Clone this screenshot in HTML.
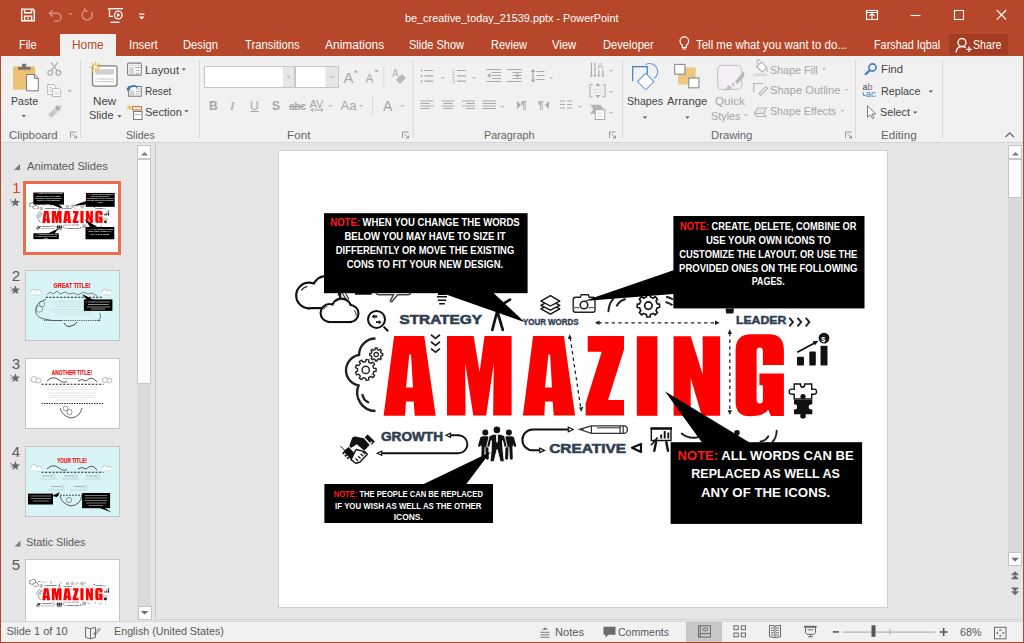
<!DOCTYPE html>
<html><head><meta charset="utf-8"><title>PowerPoint</title>
<style>
*{margin:0;padding:0;box-sizing:border-box}
html,body{width:1024px;height:643px;overflow:hidden;background:#e6e6e6;font-family:"Liberation Sans",sans-serif}
.a{position:absolute}
.t{position:absolute;white-space:pre;font-family:"Liberation Sans",sans-serif}
</style></head><body>
<!-- title + tabs -->
<div class="a" style="left:0;top:0;width:1024px;height:56px;background:#b7472a"></div>
<div class="a" style="left:60px;top:34px;width:56px;height:22px;background:#f1f1f1"></div>
<div class="a" style="left:949px;top:34px;width:59px;height:21px;background:#a33c22"></div>
<!-- ribbon -->
<div class="a" style="left:0;top:56px;width:1024px;height:87px;background:#f1f1f1;border-bottom:1px solid #d5d5d5"></div>
<!-- main area -->
<div class="a" style="left:0;top:143px;width:1024px;height:478px;background:#e6e6e6"></div>
<div class="a" style="left:157px;top:619px;width:866px;height:1px;background:#d4d4d4"></div>
<!-- status bar -->
<div class="a" style="left:0;top:621px;width:1024px;height:22px;background:#f1f1f1;border-top:1px solid #d6d6d6"></div>
<div class="a" style="left:686px;top:622px;width:36px;height:20px;background:#c8c8c8"></div>
<!-- window borders -->
<div class="a" style="left:0;top:56px;width:1px;height:587px;background:#b7472a"></div>
<div class="a" style="left:1023px;top:56px;width:1px;height:587px;background:#b7472a"></div>
<div class="a" style="left:0;top:642px;width:1024px;height:1px;background:#b7472a"></div>
<!-- left panel scrollbar -->
<div class="a" style="left:137px;top:145px;width:14px;height:475px;background:#dadada"></div>
<div class="a" style="left:137px;top:145px;width:14px;height:14px;background:#fff;border:1px solid #c6c6c6"></div>
<div class="a" style="left:137px;top:159px;width:14px;height:225px;background:#fff;border:1px solid #c6c6c6"></div>
<div class="a" style="left:137.5px;top:606px;width:14px;height:14px;background:#fff;border:1px solid #c6c6c6"></div>
<div class="a" style="left:155px;top:143px;width:1px;height:477px;background:#c8c8c8"></div>
<!-- right scrollbar -->
<div class="a" style="left:1008px;top:145px;width:14px;height:419px;background:#dadada"></div>
<div class="a" style="left:1008px;top:145px;width:14px;height:14px;background:#fff;border:1px solid #c6c6c6"></div>
<div class="a" style="left:1008px;top:159px;width:14px;height:39px;background:#fff;border:1px solid #c6c6c6"></div>
<div class="a" style="left:1008px;top:552px;width:14px;height:14px;background:#fff;border:1px solid #c6c6c6"></div>
<!-- slide -->
<div class="a" style="left:278px;top:150px;width:610px;height:458px;background:#fff;border:1px solid #cfcfcf"></div>
<!-- thumbnails -->
<div class="a" style="left:23.3px;top:180.5px;width:97.5px;height:74px;background:#fff;border:3px solid #ea6e4b"></div>
<div class="a" style="left:25px;top:270px;width:95px;height:71px;background:#d8f4f6;border:1px solid #c6c6c6"></div>
<div class="a" style="left:25px;top:358px;width:95px;height:71px;background:#fff;border:1px solid #c6c6c6"></div>
<div class="a" style="left:25px;top:446px;width:95px;height:71px;background:#d8f4f6;border:1px solid #c6c6c6"></div>
<div class="a" style="left:25px;top:559px;width:95px;height:62px;background:#fff;border:1px solid #c6c6c6;border-bottom:none"></div>
<svg class="a" style="left:0;top:0" width="1024" height="643" viewBox="0 0 1024 643">
<!-- ===== title bar icons ===== -->
<g fill="none" stroke="#fff" stroke-width="1.4">
  <!-- save -->
  <path d="M21.7 9.1h11.3l1.3 1.3v10.3h-12.6z"/>
  <path d="M24.6 9.1v3.6h7v-3.6"/>
  <path d="M24.6 20.7v-4.6h7v4.6"/>
</g>
<rect x="27.5" y="17.6" width="1.5" height="1.8" fill="#fff"/>
<g fill="none" stroke="#d98f7b" stroke-width="1.5">
  <!-- undo -->
  <path d="M49.5 13.2h7.5a4 4 0 0 1 0 8h-2.5"/>
  <path d="M52.7 10l-3.2 3.2 3.2 3.2"/>
  <!-- redo circle -->
  <path d="M84.8 10.6a5 5 0 1 0 6.6 1.6"/>
  <path d="M85 7.6l-.2 3.1 3 .6"/>
</g>
<path d="M68.5 13.3h4l-2 2.3z" fill="#d98f7b"/>
<g fill="none" stroke="#fff" stroke-width="1.3">
  <path d="M107.8 8.7h15.2"/>
  <path d="M109.5 9.3v7.1h3.5"/>
  <circle cx="118.3" cy="15" r="3.8"/>
  <path d="M110.5 22.3h9"/>
</g>
<path d="M117 13v4.2l3.3-2.1z" fill="#fff"/>
<rect x="139" y="13.5" width="5.5" height="1.2" fill="#fff"/>
<path d="M139 16.5h5.5l-2.75 3z" fill="#fff"/>
<!-- window controls -->
<g fill="none" stroke="#fff" stroke-width="1.1">
  <rect x="866.5" y="10.5" width="11" height="9"/>
  <path d="M866.5 12.5h11"/>
  <path d="M869.5 16l2.5-2.5 2.5 2.5M872 13.7v5.8"/>
  <path d="M910.5 15.5h10"/>
  <rect x="954.5" y="10.5" width="9" height="9"/>
  <path d="M996.8 10l9.4 9.6M1006.2 10l-9.4 9.6"/>
</g>
<!-- tell me bulb -->
<g fill="none" stroke="#fff" stroke-width="1.1">
  <path d="M682.3 45.5c-1.8-1.4-2.3-3-2.3-4.3a4.3 4.3 0 0 1 8.6 0c0 1.3-.5 2.9-2.3 4.3v2h-4z"/>
  <path d="M682.5 49h3.6"/>
</g>
<!-- share person -->
<g fill="none" stroke="#fff" stroke-width="1.3">
  <circle cx="962" cy="42.5" r="4"/>
  <path d="M956 52.5c.5-4 3-6 6-6 1.5 0 2.7.4 3.7 1.2"/>
  <path d="M966.3 49.3h5.5M969 46.5v5.6"/>
</g>
<!-- ===== ribbon ===== -->
<!-- separators -->
<g fill="#d9d9d9">
  <rect x="80" y="60" width="1" height="78"/>
  <rect x="199" y="60" width="1" height="78"/>
  <rect x="412.5" y="60" width="1" height="78"/>
  <rect x="622" y="60" width="1" height="78"/>
  <rect x="855" y="60" width="1" height="78"/>
  <rect x="942" y="60" width="1" height="78"/>
</g>
<!-- paste -->
<rect x="13" y="66.3" width="22.2" height="23.4" rx="1.5" fill="#ebc174"/>
<rect x="18" y="67" width="12.7" height="2.8" fill="#767676"/>
<rect x="22" y="63.7" width="4.3" height="3.5" rx="1" fill="#767676"/>
<path d="M26.6 74.5h7.8l3.9 3.9v12.4h-11.7z" fill="#fff" stroke="#7a7a7a" stroke-width="1"/>
<path d="M34.4 74.5v3.9h3.9" fill="none" stroke="#7a7a7a" stroke-width="1"/>
<path d="M21.7 115h4.3l-2.15 2.2z" fill="#555"/>
<!-- scissors -->
<g fill="none" stroke="#adadad" stroke-width="1.2">
  <circle cx="50.3" cy="72.8" r="2.4"/>
  <circle cx="58.4" cy="72.8" r="2.4"/>
  <path d="M51.5 70.7l6.2-8.3M57.2 70.7l-6.2-8.3"/>
</g>
<!-- copy -->
<g fill="#fff" stroke="#b5b5b5" stroke-width="1">
  <path d="M47.7 84.5h6l2 2v8h-8z"/>
  <path d="M52.7 88.5h6l2 2v6h-8z"/>
</g>
<g stroke="#c3c3c3" stroke-width=".8"><path d="M49 87.5h3M49 89.5h3M49 91.5h3M54.5 92h4.5M54.5 94h4.5"/></g>
<path d="M67.5 90h4.3l-2.15 2.2z" fill="#b0b0b0"/>
<!-- format painter -->
<path d="M48 114.5l6-6 3.5 3.5-6 6z" fill="#c8c8c8"/>
<path d="M54.5 108l3-3 3.5 3.5-3 3z" fill="#b0b0b0"/>
<path d="M57.8 107.3l2.6-2.4 1.3 1.3-2.4 2.6z" fill="#c0c0c0"/>
<!-- clipboard launcher -->
<g fill="none" stroke="#8a8a8a" stroke-width=".9">
  <path d="M70.5 138v-6h6"/>
  <path d="M72.5 134l4 4M74 138h2.5v-2.5"/>
</g>
<!-- new slide -->
<rect x="92.5" y="65.8" width="24.5" height="20.3" rx="2" fill="#fff" stroke="#7d7d7d" stroke-width="1.3"/>
<rect x="95.4" y="69.1" width="18.6" height="5.5" fill="#d0d0d0"/>
<path d="M98 79h16M98 81.6h16" stroke="#c4c4c4" stroke-width="1"/>
<path d="M95.4 79h1.6M95.4 81.6h1.6" stroke="#c4c4c4" stroke-width="1"/>
<g stroke="#efc060" stroke-width="1.3"><path d="M95.4 61.6v11M89.9 67.1h11M91.5 63.2l7.8 7.8M99.3 63.2l-7.8 7.8"/></g>
<circle cx="95.4" cy="67.1" r="1.6" fill="#fff"/>
<path d="M117.3 115.3h4.3l-2.15 2.2z" fill="#555"/>
<!-- layout / reset / section -->
<rect x="127.6" y="63.1" width="13.7" height="12" rx="1" fill="#fff" stroke="#7d7d7d" stroke-width="1.1"/>
<path d="M128.5 65.3h12" stroke="#bdbdbd" stroke-width=".8"/>
<rect x="129.3" y="67" width="4.4" height="7" fill="#d0d0d0"/>
<path d="M135 67.5h5M135.5 70.4h3.5M135.5 73.3h3.5" stroke="#9a9a9a" stroke-width=".9"/>
<path d="M181.6 68.4h4.3l-2.15 2.2z" fill="#555"/>
<rect x="128.6" y="86.5" width="12.7" height="9.7" fill="#fff" stroke="#7d7d7d" stroke-width="1.1"/>
<rect x="130" y="90.5" width="4.5" height="4.5" fill="#d0d0d0"/>
<path d="M136 89h4M136 91.5h4M136 94h3" stroke="#9a9a9a" stroke-width=".8"/>
<path d="M128.8 89.5a5 4.6 0 0 1 8.6 -2" fill="none" stroke="#3f7fc1" stroke-width="1.8"/>
<path d="M126.2 87.3l1.3 4.3 3.3-2.6z" fill="#3f7fc1"/>
<g stroke="#efc060" stroke-width=".9"><path d="M129.5 104.5v6M126.5 107.5h6M127.3 105.3l4.4 4.4M131.7 105.3l-4.4 4.4"/></g>
<rect x="132.5" y="106.5" width="9" height="3.5" fill="none" stroke="#e8733e" stroke-width="1.1"/>
<rect x="133.5" y="111.5" width="8.5" height="8" fill="#fff" stroke="#7d7d7d" stroke-width="1"/>
<path d="M135 114.5h5.5" stroke="#b0b0b0" stroke-width="1"/>
<path d="M184.3 110.3h4.3l-2.15 2.2z" fill="#555"/>
<!-- font boxes -->
<rect x="204.5" y="66.5" width="90" height="21" fill="#fff" stroke="#c6c6c6"/>
<rect x="283" y="67" width="11" height="20" fill="#e6e6e6"/>
<rect x="295.5" y="66.5" width="43" height="21" fill="#fff" stroke="#c6c6c6"/>
<rect x="325.5" y="67" width="12.5" height="20" fill="#e6e6e6"/>
<path d="M286.5 76.3h4l-2 2z M329.8 76.3h4l-2 2z" fill="#b9b9b9"/>
<!-- grow/shrink font -->
<g fill="#a9a9a9" font-family="Liberation Sans" font-size="15">
  <text x="343.5" y="83">A</text>
  <text x="365.5" y="83" font-size="12">A</text>
</g>
<path d="M353.5 72.5l2.2-2.5 2.2 2.5z M374.3 70h4.4l-2.2 2.5z" fill="#a9a9a9"/>
<rect x="383.3" y="66.5" width="1" height="20" fill="#d9d9d9"/>
<g fill="#b8b8b8"><path d="M396 80l6-6 4 4-6 6z"/></g>
<text x="392" y="77" font-family="Liberation Sans" font-size="10" fill="#b0b0b0">A</text>
<!-- B I U S abc AV Aa A -->
<g fill="#a6a6a6" font-family="Liberation Sans" font-size="12">
  <text x="209" y="110" font-weight="700">B</text>
  <text x="230" y="110" font-style="italic" font-family="Liberation Serif" font-size="13">I</text>
  <text x="250" y="110">U</text>
  <text x="272" y="110" font-weight="700">S</text>
  <text x="289" y="110" font-size="10.5" font-weight="700" letter-spacing="-0.5">abc</text>
  <text x="309.5" y="107.5" font-size="11">AV</text>
  <text x="340.5" y="110" font-size="13">Aa</text>
  <text x="383" y="110.5" font-size="14">A</text>
</g>
<rect x="250.5" y="111" width="8.5" height="1" fill="#a6a6a6"/>
<path d="M289 106.5h15" stroke="#a6a6a6" stroke-width="1"/>
<path d="M311 110h12M311 110l2-1.6M311 110l2 1.6M323 110l-2-1.6M323 110l-2 1.6" stroke="#a6a6a6" stroke-width="1" fill="none"/>
<path d="M328.5 105h4l-2 2z M359 105h4l-2 2z M400.5 105h4l-2 2z" fill="#b9b9b9"/>
<rect x="372" y="96" width="1" height="19" fill="#d9d9d9"/>
<g fill="none" stroke="#8a8a8a" stroke-width=".9">
  <path d="M402.5 138v-6h6"/><path d="M404.5 134l4 4M406 138h2.5v-2.5"/>
</g>
<!-- paragraph icons -->
<g stroke="#a9a9a9" stroke-width="1.2" fill="none">
  <path d="M424.5 70.5h8.7M424.5 75.8h8.7M424.5 81.2h8.7"/>
  <path d="M457 70.5h9M457 75.8h9M457 81.2h9"/>
  <path d="M486.5 69.5h14.5M492 72.5h9M492 75.5h9M492 78.5h9M486.5 81.5h14.5"/>
  <path d="M507 69.5h14.5M512.5 72.5h9M512.5 75.5h9M512.5 78.5h9M507 81.5h14.5"/>
  <path d="M536.5 71.5h8M536.5 75.5h8M536.5 79.5h8"/>
  <path d="M533 69.5v12.5"/>
  <path d="M420.5 101h13M420.5 103.5h9M420.5 106h13M420.5 108.5h9"/>
  <path d="M441.5 101h13M443.5 103.5h9M441.5 106h13M443.5 108.5h9"/>
  <path d="M462 101h13M466 103.5h9M462 106h13M466 108.5h9"/>
  <path d="M482.5 101h13.5M482.5 103.5h13.5M482.5 106h13.5M482.5 108.5h13.5"/>
  <path d="M560 101h5M560 104.5h5M560 108h5M567 101h5M567 104.5h5M567 108h5"/>
</g>
<g fill="#a9a9a9">
  <circle cx="421.5" cy="70.5" r="1"/><circle cx="421.5" cy="75.8" r="1"/><circle cx="421.5" cy="81.2" r="1"/>
  <path d="M487 75.5l3.5-2.5v5z M520 75.5l-3.5-2.5v5z"/>
  <path d="M530.5 72l2.5-3 2.5 3z M530.5 79.5l2.5 3 2.5-3z"/>
  <path d="M517 101l4 4-4 4z M549 101l-4 4 4 4z"/>
</g>
<g font-family="Liberation Sans" font-size="5" fill="#a9a9a9"><text x="452" y="72.5">1</text><text x="452" y="78">2</text><text x="452" y="83.3">3</text></g>
<g font-family="Liberation Sans" font-size="10" font-weight="700" fill="#a9a9a9"><text x="521" y="109">¶</text><text x="538" y="109">¶</text></g>
<path d="M440.7 77h4l-2 2z M472 77h4l-2 2z M549.2 77h4l-2 2z M609 70h4l-2 2z M500.5 106h4l-2 2z M578.3 106h4l-2 2z M609 91h4l-2 2z M609 112h4l-2 2z" fill="#b9b9b9"/>
<g stroke="#a9a9a9" stroke-width="1.1" fill="none">
  <path d="M591.4 62.5v13M594.9 62.5v13M598.9 70v5.5M602.9 70v5.5"/>
  <path d="M590 84.5h2.5M603 84.5h2M590 84.5v12.3h2.5M605 84.5v12.3h-2.5"/>
  <path d="M593 89.3h9M593 92.3h9" stroke="#c4bcc6" stroke-width="1"/>
</g>
<rect x="590.6" y="85" width="13.8" height="11.3" fill="#f4eef5" opacity=".6"/>
<g fill="#a9a9a9">
  <path d="M589.8 75.2l1.6 2 1.6-2zM593.3 75.2l1.6 2 1.6-2zM597.3 75.2l1.6 2 1.6-2zM601.3 75.2l1.6 2 1.6-2z"/>
  <path d="M595.4 86l2.5-3 2.5 3zM595.4 95l2.5 3 2.5-3z"/>
</g>
<text x="597.6" y="68.6" font-family="Liberation Sans" font-size="8.5" fill="#a9a9a9">A</text>
<path d="M590 104.8h10.5l3.4 4.4-3.4 4.5h-10.5l3.4-4.5z" fill="#b5b5b5"/>
<rect x="595.3" y="109.7" width="9.5" height="9.8" fill="#fff" stroke="#a9a9a9" stroke-width="1"/>
<path d="M597.5 113h5M597.5 116h5" stroke="#c8c8c8" stroke-width=".8"/>
<g fill="none" stroke="#8a8a8a" stroke-width=".9">
  <path d="M609.5 138v-6h6"/><path d="M611.5 134l4 4M613 138h2.5v-2.5"/>
</g>
<!-- shapes -->
<path d="M645.5 64.8a7.8 7.8 0 1 1 8.5 13.5" fill="none" stroke="#6a9fd8" stroke-width="1.1"/>
<path d="M632.7 81.2V66.7h14.6v8" fill="none" stroke="#3f7fc1" stroke-width="1.2"/>
<path d="M645.7 73.4l8.2 8.2-8.2 8.2-8.2-8.2z" fill="#fff" stroke="#6a9fd8" stroke-width="1.1"/>
<path d="M642.8 116.5h4.3l-2.15 2.2z" fill="#555"/>
<!-- arrange -->
<rect x="678.1" y="67.4" width="17.6" height="17.2" fill="#ebc77f"/>
<rect x="674.7" y="64.4" width="10.2" height="9.8" fill="#fff" stroke="#8a8a8a" stroke-width="1.1"/>
<rect x="688.8" y="78" width="10.1" height="9.8" fill="#fff" stroke="#8a8a8a" stroke-width="1.1"/>
<path d="M685.3 116.5h4.3l-2.15 2.2z" fill="#555"/>
<!-- quick styles -->
<rect x="717.6" y="65.3" width="24" height="24" rx="4.5" fill="#f4f0f5" stroke="#c9c9c9" stroke-width="1.2"/>
<path d="M724 91.5l4.5-6.5 3.5 3z" fill="#bdbdbd"/>
<path d="M731 84.5l2.2 2.2 2-2-2.2-2.2z" fill="#c8c8c8"/>
<path d="M735 81.8l8.8-10.5 .8 4.2-7.2 8.8z" fill="#b8b8b8"/>
<path d="M743.8 114.5h4l-2 2z" fill="#b9b9b9"/>
<!-- shape fill/outline/effects -->
<g fill="none" stroke="#b5b5b5" stroke-width="1.1">
  <path d="M756.5 66.5l5-4.5 5.5 5.5-5 4.5z" fill="#fff"/>
  <path d="M758 64l-1-2.5a1.6 1.6 0 0 1 3 -1"/>
  <path d="M753.8 92.8v-9.3h9.5"/>
  <path d="M759 93.5l6.8-6.8 1.8 1.8-6.8 6.8z"/>
  <path d="M754.5 113.5l3-5.5h9l-3 5.5z" fill="#e8e8e8"/>
  <path d="M754.5 113.5l2 3h9.5l-2-3"/>
</g>
<path d="M766.5 68.5q1.5 2 0 3.5" stroke="#b5b5b5" stroke-width="1.1" fill="none"/>
<rect x="753.5" y="73.6" width="13.6" height="2.6" fill="#ddd8df"/>
<path d="M822 68.3h4l-2 2z M844.5 89h4l-2 2z M840.5 110h4l-2 2z" fill="#b9b9b9"/>
<g fill="none" stroke="#8a8a8a" stroke-width=".9">
  <path d="M845.5 138v-6h6"/><path d="M847.5 134l4 4M849 138h2.5v-2.5"/>
</g>
<!-- find / replace / select -->
<circle cx="872.5" cy="67.5" r="3.6" fill="none" stroke="#3f7fc1" stroke-width="1.6"/>
<path d="M869.8 70.4l-4.8 4.3" stroke="#3f7fc1" stroke-width="2.2"/>
<text x="862.5" y="90.2" font-family="Liberation Sans" font-size="9" fill="#444">a</text>
<text x="867.6" y="90.2" font-family="Liberation Sans" font-size="9" fill="#8e5fb8">b</text>
<text x="865.8" y="97" font-family="Liberation Sans" font-size="9.5" fill="#3f7fc1">ac</text>
<path d="M863.3 92.3v3h2.3" fill="none" stroke="#3f7fc1" stroke-width="1"/>
<path d="M928.6 90.5h4.3l-2.15 2.2z" fill="#555"/>
<path d="M867.5 105.8v11.5l2.8-2.6 2.2 4 1.6-.8-2.1-3.9h3.8z" fill="#fff" stroke="#6a6a6a" stroke-width=".9"/>
<path d="M913 111.5h4.3l-2.15 2.2z" fill="#555"/>
<path d="M1005.5 137l4.2-4.2 4.2 4.2" fill="none" stroke="#666" stroke-width="1.3"/>
<!-- ===== left panel ===== -->
<path d="M20 164v6h-6z" fill="#7a7a7a"/>
<path d="M20.5 540.5v6h-6z" fill="#7a7a7a"/>
<path d="M141 155.5l3.5-3.5 3.5 3.5z" fill="#7a7a7a"/>
<path d="M140.8 611l3.8 3.6 3.8-3.6z" fill="#6a6a6a"/>
<path d="M1012 155.5l3.5-3.5 3.5 3.5z" fill="#7a7a7a"/>
<path d="M1011.3 557.8l3.8 3.6 3.8-3.6z" fill="#6a6a6a"/>
<g fill="#6a6a6a"><path d="M1011 575.3l4-4 4 4zM1011 579.3l4-4 4 4z"/><path d="M1011 587.5l4 4 4-4zM1011 591.3l4 4 4-4z"/></g>
<g font-family="Liberation Sans" font-size="15" fill="#595959">
<text x="12.2" y="193" fill="#d24726">1</text>
<text x="11.8" y="281">2</text>
<text x="11.8" y="369">3</text>
<text x="11.8" y="457">4</text>
<text x="11.8" y="570">5</text>
</g>
<path d="M15.40 197.70 L16.63 200.90 L20.06 201.09 L17.40 203.25 L18.28 206.56 L15.40 204.70 L12.52 206.56 L13.40 203.25 L10.74 201.09 L14.17 200.90Z" fill="#6a6a6a"/>
<path d="M10.2 200.0h1.3M10.6 203.4h1.5" stroke="#8a8a8a" stroke-width="1"/>
<path d="M15.40 285.30 L16.63 288.50 L20.06 288.69 L17.40 290.85 L18.28 294.16 L15.40 292.30 L12.52 294.16 L13.40 290.85 L10.74 288.69 L14.17 288.50Z" fill="#6a6a6a"/>
<path d="M10.2 287.6h1.3M10.6 291.0h1.5" stroke="#8a8a8a" stroke-width="1"/>
<path d="M15.40 373.30 L16.63 376.50 L20.06 376.69 L17.40 378.85 L18.28 382.16 L15.40 380.30 L12.52 382.16 L13.40 378.85 L10.74 376.69 L14.17 376.50Z" fill="#6a6a6a"/>
<path d="M10.2 375.6h1.3M10.6 379.0h1.5" stroke="#8a8a8a" stroke-width="1"/>
<path d="M15.40 461.10 L16.63 464.30 L20.06 464.49 L17.40 466.65 L18.28 469.96 L15.40 468.10 L12.52 469.96 L13.40 466.65 L10.74 464.49 L14.17 464.30Z" fill="#6a6a6a"/>
<path d="M10.2 463.4h1.3M10.6 466.8h1.5" stroke="#8a8a8a" stroke-width="1"/>
<g transform="translate(0 0.8)">
<!-- ===== status bar ===== -->
<g fill="none" stroke="#6a6a6a" stroke-width="1">
  <path d="M85.5 626.5v10l5 1.5 5-1.5v-10l-5 1.5z"/>
  <path d="M90.5 628v10"/>
  <path d="M93.5 633l5.5-5.5 1.3 1.3-5.5 5.5z"/>
</g>
<g fill="#7a7a7a"><path d="M542 629l3-2.5 3 2.5z"/></g>
<g stroke="#7a7a7a" stroke-width="1"><path d="M540.5 631.5h9M540.5 634h9M540.5 636.5h9"/></g>
<path d="M603.5 626h12v8h-7l-3 3v-3h-2z" fill="#6a6a6a"/>
<g fill="none" stroke="#6a6a6a" stroke-width="1">
  <rect x="698.5" y="625" width="12" height="11.3"/>
  <path d="M700.3 625v11.3M700.3 632.8h10.2"/>
  <rect x="703.3" y="627.3" width="4.3" height="2.6" rx="1"/>
  <rect x="733.9" y="625" width="4.3" height="3.8"/><rect x="741.2" y="625" width="4.3" height="3.8"/>
  <rect x="733.9" y="632.2" width="4.3" height="3.8"/><rect x="741.2" y="632.2" width="4.3" height="3.8"/>
  <path d="M769.5 624.5v11.5l5.5 .8 5.5-.8v-11.5l-5.5 .8z M775 625.3v11.5"/>
  <path d="M771 627.3h3M771 629.6h3M771 631.9h3M771 634.2h3M776 627.3h3M776 629.6h3M776 631.9h3M776 634.2h3" stroke-width=".9"/>
  <path d="M805.5 626.5v5.5l1.5 1.5h7l1.5-1.5v-5.5M807.5 629h6M810.5 633.5v2.5M808 636h5"/>
</g>
<rect x="832.8" y="630.3" width="6" height="1.6" fill="#555"/>
<rect x="843" y="630.8" width="92.3" height="1" fill="#a6a6a6"/>
<rect x="871.5" y="624.5" width="4" height="11.5" fill="#555"/>
<rect x="804" y="625" width="12.6" height="2" fill="#6a6a6a"/>
<rect x="889.5" y="628" width="1" height="6" fill="#a6a6a6"/>
<path d="M939.7 631.2h8M943.7 627.2v8" stroke="#555" stroke-width="1.6"/>
<g fill="none" stroke="#6a6a6a" stroke-width="1">
  <rect x="994.5" y="626.5" width="11.5" height="11.5"/>
</g>
<g fill="#6a6a6a"><path d="M1000.2 628l-1.5 2h3z M1000.2 636.5l-1.5-2h3z M996 632.2l2-1.5v3z M1004.5 632.2l-2-1.5v3z"/></g>

</g>

<g id="art">
<g fill="#111" stroke="#111" stroke-width="4.4">
<circle cx="309" cy="295.5" r="11.7"/><circle cx="326" cy="290" r="12.7"/><rect x="309" y="295.5" width="30" height="11.5"/></g>
<g fill="#fff"><circle cx="309" cy="295.5" r="11.7"/><circle cx="326" cy="290" r="12.7"/><rect x="309" y="295.5" width="30" height="11.5"/></g>
<path d="M301.3 290.5 Q303 287.3 307.3 286.3" stroke="#333" stroke-width="1.3" fill="none"/>
<path d="M342.3 293.3 L346.5 300 M345.5 293.3 L349 299.5" stroke="#333" stroke-width="1.2" fill="none"/>
<g fill="#111" stroke="#111" stroke-width="4.2">
<circle cx="329.5" cy="313" r="7.9"/><circle cx="341.5" cy="308.5" r="8.8"/><circle cx="350" cy="313.5" r="7.4"/><rect x="329.5" y="313" width="20.5" height="8"/></g>
<g fill="#fff"><circle cx="329.5" cy="313" r="7.9"/><circle cx="341.5" cy="308.5" r="8.8"/><circle cx="350" cy="313.5" r="7.4"/><rect x="329.5" y="313" width="20.5" height="8"/></g>
<path d="M323.6 309.2 Q325 306.8 327.3 306 M354.4 310.2 Q356 312.5 356.3 315.8" stroke="#444" stroke-width="1.1" fill="none"/>
<rect x="354.9" y="292" width="16.8" height="2.7" fill="#000"/>
<path d="M376.3 292.5 Q376.5 294.8 379 294.8 H393.5 L390.3 300.8 Q390.8 302.3 392.3 301.3 L397.7 294.8 H408 Q410.5 294.8 410.5 292.5" stroke="#444" stroke-width="1.5" fill="#fff"/>
<circle cx="376.5" cy="319.4" r="8.5" fill="none" stroke="#111" stroke-width="2"/>
<path d="M383.6 326.6 L388.2 331.3" stroke="#111" stroke-width="2"/>
<path d="M371.8 316.5 L374.5 314.2 V315.6 H377.3 V317.4 H374.5 V318.8Z M381.5 322.2 L378.8 320 V321.3 H376 V323.1 H378.8 V324.4Z" fill="#111"/>
<path d="M437 296.8 H447 M437.8 300.3 H446.2 M439.2 303.8 H444.8" stroke="#111" stroke-width="1.6"/>
<rect x="438" y="293" width="8" height="2" fill="#000"/>
<path d="M497 312 L492.3 329.8 M497.5 312 L502.8 329.8 M503.8 303.3 L510 299.6" stroke="#111" stroke-width="2.7" stroke-linecap="round" fill="none"/>
<path d="M431 334.8 L435.5 338.4 L440 334.8 M431 341.8 L435.5 345.4 L440 341.8 M431 348.6 L435.5 352.2 L440 348.6" stroke="#222" stroke-width="1.8" fill="none"/>
<g fill="#fff" stroke="#111" stroke-width="1.4" stroke-linejoin="round">
<path d="M540.9 308.9 L550.4 304 L559.8 308.9 L550.4 314.1Z"/>
<path d="M540.9 305.3 L550.4 300.3 L559.8 305.3 L550.4 310.2Z"/>
<path d="M540.9 301.1 L550.4 295.6 L559.8 301.1 L550.4 306Z"/></g>
<g fill="none" stroke="#222" stroke-width="1.4">
<path d="M575.5 297.3 H580.3 L581.3 294.8 H588.3 L589.3 297.3 H592.8 Q595 297.3 595 299.5 V310 Q595 312.2 592.8 312.2 H575.5 Q573.2 312.2 573.2 310 V299.5 Q573.2 297.3 575.5 297.3Z"/>
<circle cx="584" cy="305" r="3.8" stroke-width="1.6"/>
<path d="M573.5 307.6 H579.5 M588.5 307.6 H594.5" stroke="#666"/></g>
<path d="M608.4 311.2 Q609.2 302.5 613.2 299 M616.8 305.7 Q619.5 300.8 625 299.2" stroke="#222" stroke-width="2" fill="none" stroke-linecap="round"/>
<path d="M656.71 302.36 L657.19 303.87 L659.57 304.08 L659.57 307.52 L657.19 307.73 L656.71 309.24 L655.98 310.65 L657.52 312.48 L655.08 314.92 L653.25 313.38 L651.84 314.11 L650.33 314.59 L650.12 316.97 L646.68 316.97 L646.47 314.59 L644.96 314.11 L643.55 313.38 L641.72 314.92 L639.28 312.48 L640.82 310.65 L640.09 309.24 L639.61 307.73 L637.23 307.52 L637.23 304.08 L639.61 303.87 L640.09 302.36 L640.82 300.95 L639.28 299.12 L641.72 296.68 L643.55 298.22 L644.96 297.49 L646.47 297.01 L646.68 294.63 L650.12 294.63 L650.33 297.01 L651.84 297.49 L653.25 298.22 L655.08 296.68 L657.52 299.12 L655.98 300.95Z" fill="#fff" stroke="#111" stroke-width="1.6" stroke-linejoin="round"/>
<circle cx="648.4" cy="305.6" r="3.7" fill="none" stroke="#111" stroke-width="1.7"/>
<path d="M666 296.8 Q670 297.5 673 299.5 M665.5 302 Q669.5 303 672.5 305.3" stroke="#222" stroke-width="2" fill="none"/>
<path d="M725.6 308.5 H734 L733.4 313.5 H726.2Z" fill="#111"/>
<g stroke="#222" stroke-width="1.3" stroke-dasharray="3.3 3.3" fill="none"><path d="M598.5 322.8 H716"/><path d="M729.8 333 V411.5"/><path d="M570.2 338 L580.8 408.3"/></g>
<g fill="#222"><path d="M594.8 322.8 L599.5 320.6 V325Z M719.6 322.8 L715 320.6 V325Z M729.8 329.3 L727.6 334 H732Z M729.8 414.9 L727.6 410.2 H732Z M569.5 334.2 L567.8 339 L572 338.4Z M581.4 411.9 L583.2 407 L579 407.6Z"/></g>
<path d="M789.3 317.8 L793 322 L789.3 326.3 M797.5 317.8 L801.2 322 L797.5 326.3 M805.7 317.8 L809.4 322 L805.7 326.3" stroke="#222" stroke-width="1.9" fill="none"/>
<g fill="#111"><rect x="797" y="356.8" width="7" height="8.8" rx="1"/><rect x="809.3" y="351.6" width="6.5" height="14" rx="1"/><rect x="820.5" y="345.7" width="7" height="19.9" rx="1"/>
<circle cx="824" cy="338.1" r="5.4"/></g>
<path d="M797.3 352.3 L815.5 342.5" stroke="#111" stroke-width="1.8"/>
<path d="M818.5 340.8 L812.6 341.2 L815 345.3Z" fill="#111"/>
<text x="821.3" y="341.8" font-family="Liberation Sans" font-weight="700" font-size="7.5" fill="#fff">$</text>
<path d="M794.2 384 H800.5 Q800.2 387 802.6 387.3 Q805 387 804.7 384 H811.7 V389.2 Q816.8 388.5 816.5 391.7 Q816.8 394.8 811.7 394.2 V399 H794.2 V394.2 Q788.9 394.8 789.2 391.7 Q788.9 388.5 794.2 389.2Z" fill="#fff" stroke="#111" stroke-width="1.4"/>
<circle cx="803" cy="396.5" r="2.6" fill="#111"/>
<path d="M794 400 H812.3 V404.5 Q809 403.8 808.6 406.9 Q809 410 812.3 409.3 V414.3 H805.5 Q806.8 418.5 803 418.8 Q799.2 418.5 800.5 414.3 H794 V409.3 Q797.3 410 796.9 406.9 Q797.3 403.8 794 404.5Z" fill="#111"/>
<path d="M375.5 338.5 A16.5 16.5 0 0 0 359 355 A15.5 15.5 0 0 0 358.5 385.5 A18.6 18.6 0 0 0 375.5 411" stroke="#222" stroke-width="2.4" fill="none"/>
<path d="M362.3 394 A11 11 0 0 0 369 402.7" stroke="#222" stroke-width="2.2" fill="none"/>
<path d="M380.82 352.59 L381.08 353.43 L382.72 353.49 L382.72 355.51 L381.08 355.57 L380.82 356.41 L380.41 357.20 L381.52 358.40 L380.10 359.82 L378.90 358.71 L378.11 359.12 L377.27 359.38 L377.21 361.02 L375.19 361.02 L375.13 359.38 L374.29 359.12 L373.50 358.71 L372.30 359.82 L370.88 358.40 L371.99 357.20 L371.58 356.41 L371.32 355.57 L369.68 355.51 L369.68 353.49 L371.32 353.43 L371.58 352.59 L371.99 351.80 L370.88 350.60 L372.30 349.18 L373.50 350.29 L374.29 349.88 L375.13 349.62 L375.19 347.98 L377.21 347.98 L377.27 349.62 L378.11 349.88 L378.90 350.29 L380.10 349.18 L381.52 350.60 L380.41 351.80Z" fill="#fff" stroke="#222" stroke-width="1.3" stroke-linejoin="round"/><circle cx="376.2" cy="354.5" r="2.2" fill="none" stroke="#222" stroke-width="1.2"/>
<path d="M373.41 367.10 L373.75 368.34 L376.10 368.47 L376.10 371.33 L373.75 371.46 L373.41 372.70 L372.87 373.88 L374.59 375.50 L372.75 377.68 L370.86 376.27 L369.80 377.00 L368.64 377.56 L368.91 379.90 L366.10 380.39 L365.56 378.10 L364.28 377.98 L363.03 377.65 L361.73 379.62 L359.26 378.20 L360.32 376.09 L359.42 375.17 L358.67 374.12 L356.41 374.80 L355.44 372.12 L357.60 371.18 L357.50 369.90 L357.60 368.62 L355.44 367.68 L356.41 365.00 L358.67 365.68 L359.42 364.63 L360.32 363.71 L359.26 361.60 L361.73 360.18 L363.03 362.15 L364.28 361.82 L365.56 361.70 L366.10 359.41 L368.91 359.90 L368.64 362.24 L369.80 362.80 L370.86 363.53 L372.75 362.12 L374.59 364.30 L372.87 365.92Z" fill="#fff" stroke="#222" stroke-width="1.4" stroke-linejoin="round"/><circle cx="365.7" cy="369.9" r="3.6" fill="none" stroke="#222" stroke-width="1.4"/>
<g fill="#ff0000" fill-rule="evenodd">
<path d="M394.1 335.9 L424.2 335.9 L435.7 415.7 L414.7 415.7 L413.7 401.4 L406 401.4 L405 415.7 L383.6 415.7Z M409.3 354.5 L411 354.5 L413 387.4 L406 387.4Z"/>
<path d="M447 335.9 L473.6 335.9 L479.6 372 L484.5 335.9 L511.6 335.9 L511.6 415.6 L493.1 415.6 L493.8 362.9 L486.2 415.6 L473.3 415.6 L465.2 362.9 L465.5 415.6 L447 415.6Z"/>
<path d="M533.1 335.9 L563.9 335.9 L575.1 415.6 L553.7 415.6 L552.7 401.4 L545 401.4 L544.3 415.6 L522.9 415.6Z M548.4 354.5 L550.1 354.5 L552 387.4 L545 387.4Z"/>
<path d="M587.7 335.9 L624 335.9 L624 349.6 L608 400 L624 400 L624 415.6 L585.6 415.6 L585.6 403.5 L601.7 351.7 L587.7 351.7Z"/>
<rect x="636.8" y="336.2" width="20.6" height="79.6"/>
<path d="M673.6 336.2 L690.7 336.2 L702.7 374.7 L702.7 336.2 L720.1 336.2 L720.1 415.8 L701.8 415.8 L690.7 378.1 L690.7 415.8 L673.6 415.8Z"/>
<path d="M735.6 350 Q735.6 334.2 751 334.2 L769 334.2 Q783.9 334.2 783.9 350 L783.9 365 L762.9 365 L762.9 351 Q762.9 347.5 759.75 347.5 Q756.6 347.5 756.6 351 L756.6 400 Q756.6 403.5 759.75 403.5 Q762.9 403.5 762.9 400 L762.9 385.3 L759.4 385.3 L759.4 373.4 L783.9 373.4 L783.9 416 L770.8 416 L768.3 409.8 Q764 416.3 750 416.3 Q735.6 416.3 735.6 402Z"/>
</g>
<g fill="#111">
<path d="M364.6 437.3 L367.7 434.5 L374.9 441.4 L371.8 444.8Z"/>
<path d="M349.4 445.5 L352.2 437.8 Q354 436.2 356.5 436.7 L363.8 438.3 L369.6 444.9 L364.3 450.7 L356.8 444.3 L351.8 447.6 Q349.2 448 349.4 445.5Z"/>
<path d="M343.3 451.3 L348.6 446.9 L356.3 455 L351.2 459.8Z"/>
</g>
<circle cx="371.2" cy="442.6" r="1" fill="#fff"/>
<path d="M340.6 446.2 L344.8 450.4" stroke="#111" stroke-width="1"/>
<path d="M344.3 452.5 L342.7 453.7 M346.5 455 L344.8 456.2 M348.8 457.4 L347.1 458.6" stroke="#111" stroke-width="1.8"/>
<path d="M356 449.5 L364.6 451.6 L367.4 454.3 L359.8 462.2 L355.6 463.2 L351 459.6Z" fill="#fff" stroke="#111" stroke-width="1.4" stroke-linejoin="round"/>
<path d="M355.6 458.5 L358 461 M358.1 456.2 L360.6 458.6 M360.7 453.8 L363.2 456.2 M362.8 451.8 L365.3 454.2" stroke="#111" stroke-width="1.2"/>
<path d="M449 435.3 H458.4 A9 9 0 0 1 458.4 453.3 H380.5" stroke="#111" stroke-width="1.9" fill="none"/>
<path d="M446 435.3 L450.5 433.2 V437.4Z M377.2 453.3 L381.7 451.2 V455.4Z" fill="#fff" stroke="#111" stroke-width="1.2"/>
<g fill="#111">
<rect x="481" y="436.3" width="8" height="10.5" rx="1.8"/>
<rect x="505" y="436.3" width="8.2" height="10.5" rx="1.8"/>
<circle cx="485.3" cy="432.6" r="3"/><circle cx="508.9" cy="432.6" r="3"/><circle cx="496.9" cy="429.9" r="3.3"/></g>
<g stroke="#111" stroke-linecap="round" fill="none">
<path d="M481.5 438 L479.4 445.5 M512.8 438 L514.9 445.5" stroke-width="2.6"/>
<path d="M483.2 446 L482.8 458.3 M486.8 446 L487.3 458.3 M507 446 L506.6 458.3 M510.8 446 L511.3 458.3" stroke-width="3"/>
</g>
<path d="M489.3 435.8 L493.5 434.3 H500.3 L504.5 435.8 L507.2 446.8 L504.3 447.4 L502.5 440.5 L503 450 L504.3 461.8 L500.3 461.8 L497.1 449.5 L494 461.8 L490 461.8 L491.2 450 L491.3 440.5 L489.5 447.4 L486.6 446.8Z" fill="#111" stroke="#fff" stroke-width=".9"/>
<path d="M496.1 435 H497.9 L497.8 441.5 L497 443 L496.2 441.5Z" fill="#fff"/>
<path d="M568.5 429.5 H532.8 A10.4 10.4 0 0 0 532.8 450.3 H539.8" stroke="#111" stroke-width="2" fill="none"/>
<path d="M573.1 429.5 L568.3 427.3 V431.7Z M544.5 450.4 L539.7 448.2 V452.6Z" fill="#fff" stroke="#111" stroke-width="1.2"/>
<g fill="none" stroke="#333" stroke-width="1.2">
<path d="M579.4 429.4 L591.4 425.9 H624.5 A3.8 3.8 0 0 1 624.5 433.3 H591.4Z"/>
<path d="M591.4 425.9 V433.3 M620.1 425.9 V433.3 M623.2 425.9 V433.3"/>
<path d="M597 427.8 H620" stroke-width="1"/>
</g>
<path d="M579.4 429.4 L583.5 428.2 V430.6Z" fill="#333"/>
<path d="M632 447.8 L641 443.9 V451.9Z" fill="none" stroke="#111" stroke-width="2.2" stroke-linejoin="round"/>
<g stroke="#111" fill="none">
<path d="M650.4 428.5 H672" stroke-width="2.6"/>
<path d="M651.3 428.5 V440.5 H671 V428.5" stroke-width="1.4"/>
<path d="M661.2 438.4 V434.5 M664.7 438.4 V431 M668.3 438.4 V432.5" stroke-width="1.9"/>
<path d="M651 445.2 L657.6 437.6" stroke-width="1.6"/>
<path d="M656 442.3 L654.3 450.8 M666.3 442.3 L668 450.8" stroke-width="2.4" stroke-linecap="round"/>
</g>
<path d="M681.7 433.5 Q688.5 439.3 697.8 437.2 M768.3 436.3 Q765.8 440.8 760.5 441.5 M776.7 430.7 Q776.5 437.5 772.5 442" stroke="#222" stroke-width="1.9" fill="none" stroke-linecap="round"/>
<circle cx="737" cy="432.8" r="2.8" fill="#111"/>
<text x="399.4" y="324" font-family="Liberation Sans" font-weight="700" font-size="13.6" fill="#313e52" stroke="#313e52" stroke-width="0.61" textLength="82.6" lengthAdjust="spacingAndGlyphs">STRATEGY</text>
<text x="523" y="325" font-family="Liberation Sans" font-weight="700" font-size="8.2" fill="#313e52" stroke="#313e52" stroke-width="0.37" textLength="55.5" lengthAdjust="spacingAndGlyphs">YOUR WORDS</text>
<text x="736" y="324.2" font-family="Liberation Sans" font-weight="700" font-size="11.2" fill="#313e52" stroke="#313e52" stroke-width="0.50" textLength="50.2" lengthAdjust="spacingAndGlyphs">LEADER</text>
<text x="381" y="440.9" font-family="Liberation Sans" font-weight="700" font-size="12.6" fill="#313e52" stroke="#313e52" stroke-width="0.57" textLength="62" lengthAdjust="spacingAndGlyphs">GROWTH</text>
<text x="549.2" y="452.9" font-family="Liberation Sans" font-weight="700" font-size="13.6" fill="#313e52" stroke="#313e52" stroke-width="0.61" textLength="76.8" lengthAdjust="spacingAndGlyphs">CREATIVE</text>
</g>
<g id="callouts">
<path d="M433.3 290 L490.4 290 L524.8 322.3Z" fill="#000"/>
<rect x="324" y="213.2" width="203.6" height="80" fill="#000"/>
<path d="M680 267.9 L680 293.5 L584 301Z" fill="#000"/>
<rect x="673.4" y="216" width="191.1" height="92.4" fill="#000"/>
<path d="M416.5 487.5 L463.7 487.5 L490.5 452Z" fill="#000"/>
<rect x="324.4" y="484" width="168.6" height="39" fill="#000"/>
<path d="M704.5 446 L755.3 446 L664.9 391.2Z" fill="#000"/>
<rect x="670.6" y="442.2" width="191.5" height="81.7" fill="#000"/>
<text x="330.30" y="225.8" font-family="Liberation Sans" font-weight="700" font-size="10.3" fill="#fff" textLength="189.4" lengthAdjust="spacingAndGlyphs"><tspan fill="#ff1a1a">NOTE:</tspan> WHEN YOU CHANGE THE WORDS</text>
<text x="344.45" y="240.2" font-family="Liberation Sans" font-weight="700" font-size="10.3" fill="#fff" textLength="161.1" lengthAdjust="spacingAndGlyphs">BELOW YOU MAY HAVE TO SIZE IT</text>
<text x="335.80" y="254.0" font-family="Liberation Sans" font-weight="700" font-size="10.3" fill="#fff" textLength="178.4" lengthAdjust="spacingAndGlyphs">DIFFERENTLY OR MOVE THE EXISTING</text>
<text x="346.75" y="267.6" font-family="Liberation Sans" font-weight="700" font-size="10.3" fill="#fff" textLength="156.5" lengthAdjust="spacingAndGlyphs">CONS TO FIT YOUR NEW DESIGN.</text>
<text x="680.10" y="229.8" font-family="Liberation Sans" font-weight="700" font-size="10.3" fill="#fff" textLength="176.4" lengthAdjust="spacingAndGlyphs"><tspan fill="#ff1a1a">NOTE:</tspan> CREATE, DELETE, COMBINE OR</text>
<text x="705.90" y="244.0" font-family="Liberation Sans" font-weight="700" font-size="10.3" fill="#fff" textLength="124.8" lengthAdjust="spacingAndGlyphs">USE YOUR OWN ICONS TO</text>
<text x="679.30" y="257.8" font-family="Liberation Sans" font-weight="700" font-size="10.3" fill="#fff" textLength="178" lengthAdjust="spacingAndGlyphs">CUSTOMIZE THE LAYOUT. OR USE THE</text>
<text x="679.10" y="271.6" font-family="Liberation Sans" font-weight="700" font-size="10.3" fill="#fff" textLength="178.4" lengthAdjust="spacingAndGlyphs">PROVIDED ONES ON THE FOLLOWING</text>
<text x="751.80" y="285.4" font-family="Liberation Sans" font-weight="700" font-size="10.3" fill="#fff" textLength="33" lengthAdjust="spacingAndGlyphs">PAGES.</text>
<text x="333.70" y="497.4" font-family="Liberation Sans" font-weight="700" font-size="8.8" fill="#fff" textLength="149.2" lengthAdjust="spacingAndGlyphs"><tspan fill="#ff1a1a">NOTE:</tspan> THE PEOPLE CAN BE REPLACED</text>
<text x="335.10" y="508.7" font-family="Liberation Sans" font-weight="700" font-size="8.8" fill="#fff" textLength="146.4" lengthAdjust="spacingAndGlyphs">IF YOU WISH AS WELL AS THE OTHER</text>
<text x="393.75" y="520.0" font-family="Liberation Sans" font-weight="700" font-size="8.8" fill="#fff" textLength="29.1" lengthAdjust="spacingAndGlyphs">ICONS.</text>
<text x="677.60" y="459.8" font-family="Liberation Sans" font-weight="700" font-size="13.3" fill="#fff" textLength="176" lengthAdjust="spacingAndGlyphs"><tspan fill="#ff1a1a">NOTE:</tspan> ALL WORDS CAN BE</text>
<text x="691.25" y="478.3" font-family="Liberation Sans" font-weight="700" font-size="13.3" fill="#fff" textLength="148.7" lengthAdjust="spacingAndGlyphs">REPLACED AS WELL AS</text>
<text x="700.95" y="497.0" font-family="Liberation Sans" font-weight="700" font-size="13.3" fill="#fff" textLength="129.3" lengthAdjust="spacingAndGlyphs">ANY OF THE ICONS.</text>
</g>
<g transform="translate(26.4 183) scale(0.1505) translate(-278 -150)">
  <use href="#art"/><use href="#callouts"/>
</g>
<svg x="25" y="560" width="95" height="61" overflow="hidden">
<g transform="translate(1.4 0.2) scale(0.1505) translate(-278 -150)">
  <use href="#art"/>
</g>
</svg>
<!-- thumb 2 -->
<g>
  <text x="53.6" y="288" font-family="Liberation Sans" font-weight="700" font-size="6.5" fill="#f01010" stroke="#f01010" stroke-width=".15" textLength="37" lengthAdjust="spacingAndGlyphs">GREAT TITLE!</text>
  <g fill="#fff" stroke="#9a9a9a" stroke-width=".5"><circle cx="34" cy="292" r="3"/><circle cx="38.5" cy="292.5" r="2.8"/><rect x="31" y="292" width="10" height="2.5" stroke="none"/></g>
  <g fill="#fff" stroke="#9a9a9a" stroke-width=".5"><circle cx="105" cy="292" r="2.8"/><circle cx="109" cy="292.5" r="2.6"/><rect x="102" y="292" width="10" height="2.3" stroke="none"/></g>
  <path d="M47 295l3-3 3 2 4-3 3 3 5-2 4 2 5-1 4 2 5-3 5 2 4-1 5 3" fill="none" stroke="#555" stroke-width=".7"/>
  <path d="M45.7 297.3h57" stroke="#222" stroke-width="1.1" stroke-dasharray="2.2 1.4"/>
  <path d="M46 299.5 q-8 2 -10 8 q-2 8 6 11 q10 3 20 2" fill="none" stroke="#444" stroke-width=".8"/>
  <circle cx="42" cy="304" r="2.8" fill="none" stroke="#666" stroke-width=".6"/><circle cx="39.5" cy="309" r="3.2" fill="none" stroke="#666" stroke-width=".6"/>
  <g stroke="#c9d9db" stroke-width=".6"><path d="M50 301.5h46M52 304h44M55 306.5h30M50 309.5h46M52 312h40M57 314.5h34"/></g>
  <path d="M94 300l-12-6 5 6z" fill="#000"/>
  <rect x="83.9" y="299.4" width="28.5" height="11.5" fill="#000"/>
  <g stroke="#e6e6e6" stroke-width=".6"><path d="M88 302h22M88 304.5h21M87 307h23M91 309h14"/></g>
  <path d="M84.8 302h3" stroke="#e22" stroke-width=".8"/>
  <path d="M44 320.5h57" stroke="#555" stroke-width="1" stroke-dasharray="1.2 1"/>
  <path d="M100 313q2 5 -2 8" fill="none" stroke="#444" stroke-width=".7"/>
  <path d="M64 323q3 5 7 3q5 -1 6 -4" fill="none" stroke="#333" stroke-width=".9"/>
</g>
<!-- thumb 3 -->
<g>
  <text x="51.7" y="375.2" font-family="Liberation Sans" font-weight="700" font-size="6.5" fill="#f01010" stroke="#f01010" stroke-width=".15" textLength="40.4" lengthAdjust="spacingAndGlyphs">ANOTHER TITLE!</text>
  <path d="M63 378.5h16" stroke="#9aa" stroke-width=".8"/>
  <g fill="#fff" stroke="#777" stroke-width=".5"><circle cx="34" cy="379.5" r="3"/><circle cx="38.5" cy="380.5" r="2.6"/></g>
  <g fill="#fff" stroke="#777" stroke-width=".5"><circle cx="105" cy="380" r="2.6"/><circle cx="109.5" cy="380.5" r="2.4"/></g>
  <path d="M47 381q6 -6 12 -1q5 4 8 1 M78 381q4 -3 8 0 q6 -6 11 1" fill="none" stroke="#444" stroke-width=".9"/>
  <path d="M41.5 384.3h62" stroke="#222" stroke-width="1.1" stroke-dasharray="2.2 1.4"/>
  <g stroke="#d6d6d6" stroke-width=".6"><path d="M46 387.2h52M46 389.6h52M48 393h48M50 395.4h44M48 397.6h48M56 400h30"/></g>
  <path d="M41.5 403.5h62" stroke="#333" stroke-width="1" stroke-dasharray="1.5 1"/>
  <path d="M60 408q2 8 11 10q9 -1 11 -10" fill="none" stroke="#333" stroke-width=".8"/>
  <circle cx="65.5" cy="408.5" r="2.4" fill="none" stroke="#555" stroke-width=".6"/><circle cx="69.5" cy="412" r="2.6" fill="none" stroke="#555" stroke-width=".6"/>
</g>
<!-- thumb 4 -->
<g>
  <text x="57.2" y="463.2" font-family="Liberation Sans" font-weight="700" font-size="6.5" fill="#f01010" stroke="#f01010" stroke-width=".15" textLength="29.7" lengthAdjust="spacingAndGlyphs">YOUR TITLE!</text>
  <g fill="#fff" stroke="#9a9a9a" stroke-width=".5"><circle cx="34" cy="467.5" r="3"/><circle cx="38.5" cy="468.5" r="2.6"/><rect x="31" y="468" width="10" height="2.5" stroke="none"/></g>
  <g fill="#fff" stroke="#9a9a9a" stroke-width=".5"><circle cx="105" cy="468" r="2.6"/><circle cx="109.5" cy="468.5" r="2.4"/><rect x="102" y="468" width="10" height="2.3" stroke="none"/></g>
  <path d="M47 469q6 -6 12 -1q5 4 8 1 M78 469q4 -3 8 0 q6 -6 11 1" fill="none" stroke="#444" stroke-width=".9"/>
  <path d="M41.5 472.3h62" stroke="#222" stroke-width="1.1" stroke-dasharray="2.2 1.4"/>
  <g fill="none" stroke="#8a9aa8" stroke-width=".7"><path d="M42 476h10M64 476h10M86 476h10M51 486.5h10M74 486.5h10"/></g>
  <g fill="none" stroke="#a9b9c0" stroke-width=".6"><circle cx="53.5" cy="476" r="1.6"/><circle cx="75.5" cy="476" r="1.6"/><circle cx="97.5" cy="476" r="1.6"/><circle cx="62.5" cy="486.5" r="1.6"/><circle cx="85.5" cy="486.5" r="1.6"/></g>
  <g stroke="#b4c4ca" stroke-width=".6"><path d="M40 479h17M62 479h17M84 479h17M48 490h17M70 490h17"/></g>
  <path d="M45 495.2h50" stroke="#333" stroke-width="1" stroke-dasharray="1.8 1.2"/>
  <path d="M60 496q2 8 11 10q9 -1 11 -10" fill="none" stroke="#333" stroke-width=".8"/>
  <circle cx="69" cy="500" r="2.6" fill="none" stroke="#555" stroke-width=".6"/>
  <path d="M52 496l8-4-3 5z" fill="#000"/>
  <rect x="28" y="493.6" width="25" height="10.9" fill="#000"/>
  <g stroke="#d8d8d8" stroke-width=".55"><path d="M32 496h19M31 498.5h20M33 501h16"/></g>
  <path d="M29 496h3" stroke="#e22" stroke-width=".8"/>
  <rect x="82.1" y="493" width="28" height="15.2" fill="#000"/>
  <path d="M99.7 508l12 4.4-7-4.4z" fill="#000"/>
  <g stroke="#d8d8d8" stroke-width=".55"><path d="M85 495.5h22M85 498h22M85 500.5h22M86 503h20M89 505.5h14"/></g>
</g>

</svg>
<div class='t' style='left:404.64px;top:12.66px;font-size:11.5px;line-height:11.5px;color:#ffffff;font-weight:400;font-family:"Liberation Sans";transform:scaleX(0.9434);transform-origin:0 0;'>be_creative_today_21539.pptx - PowerPoint</div>
<div class='t' style='left:19.24px;top:38.58px;font-size:12px;line-height:12px;color:#ffffff;font-weight:400;font-family:"Liberation Sans";transform:scaleX(0.9058);transform-origin:0 0;'>File</div>
<div class='t' style='left:71.67px;top:38.58px;font-size:12px;line-height:12px;color:#b7472a;font-weight:400;font-family:"Liberation Sans";transform:scaleX(0.9889);transform-origin:0 0;'>Home</div>
<div class='t' style='left:129.10px;top:38.58px;font-size:12px;line-height:12px;color:#ffffff;font-weight:400;font-family:"Liberation Sans";transform:scaleX(0.9564);transform-origin:0 0;'>Insert</div>
<div class='t' style='left:183.22px;top:38.58px;font-size:12px;line-height:12px;color:#ffffff;font-weight:400;font-family:"Liberation Sans";transform:scaleX(0.9333);transform-origin:0 0;'>Design</div>
<div class='t' style='left:244.71px;top:38.58px;font-size:12px;line-height:12px;color:#ffffff;font-weight:400;font-family:"Liberation Sans";transform:scaleX(0.9387);transform-origin:0 0;'>Transitions</div>
<div class='t' style='left:325.16px;top:38.58px;font-size:12px;line-height:12px;color:#ffffff;font-weight:400;font-family:"Liberation Sans";transform:scaleX(0.9966);transform-origin:0 0;'>Animations</div>
<div class='t' style='left:409.13px;top:38.58px;font-size:12px;line-height:12px;color:#ffffff;font-weight:400;font-family:"Liberation Sans";transform:scaleX(0.9149);transform-origin:0 0;'>Slide Show</div>
<div class='t' style='left:490.73px;top:38.58px;font-size:12px;line-height:12px;color:#ffffff;font-weight:400;font-family:"Liberation Sans";transform:scaleX(0.9130);transform-origin:0 0;'>Review</div>
<div class='t' style='left:552.01px;top:38.58px;font-size:12px;line-height:12px;color:#ffffff;font-weight:400;font-family:"Liberation Sans";transform:scaleX(0.9412);transform-origin:0 0;'>View</div>
<div class='t' style='left:602.82px;top:38.58px;font-size:12px;line-height:12px;color:#ffffff;font-weight:400;font-family:"Liberation Sans";transform:scaleX(0.9279);transform-origin:0 0;'>Developer</div>
<div class='t' style='left:695.80px;top:38.58px;font-size:12px;line-height:12px;color:#ffffff;font-weight:400;font-family:"Liberation Sans";transform:scaleX(0.9539);transform-origin:0 0;'>Tell me what you want to do...</div>
<div class='t' style='left:873.94px;top:38.58px;font-size:12px;line-height:12px;color:#ffffff;font-weight:400;font-family:"Liberation Sans";transform:scaleX(0.9022);transform-origin:0 0;'>Farshad Iqbal</div>
<div class='t' style='left:973.16px;top:38.58px;font-size:12px;line-height:12px;color:#ffffff;font-weight:400;font-family:"Liberation Sans";transform:scaleX(0.8863);transform-origin:0 0;'>Share</div>
<div class='t' style='left:11.06px;top:95.96px;font-size:11.5px;line-height:11.5px;color:#444444;font-weight:400;font-family:"Liberation Sans";transform:scaleX(0.9205);transform-origin:0 0;'>Paste</div>
<div class='t' style='left:93.19px;top:95.96px;font-size:11.5px;line-height:11.5px;color:#444444;font-weight:400;font-family:"Liberation Sans";transform:scaleX(1.0091);transform-origin:0 0;'>New</div>
<div class='t' style='left:88.53px;top:110.46px;font-size:11.5px;line-height:11.5px;color:#444444;font-weight:400;font-family:"Liberation Sans";transform:scaleX(0.9596);transform-origin:0 0;'>Slide</div>
<div class='t' style='left:144.81px;top:64.76px;font-size:11.5px;line-height:11.5px;color:#444444;font-weight:400;font-family:"Liberation Sans";transform:scaleX(0.9872);transform-origin:0 0;'>Layout</div>
<div class='t' style='left:144.90px;top:85.56px;font-size:11.5px;line-height:11.5px;color:#444444;font-weight:400;font-family:"Liberation Sans";transform:scaleX(0.8756);transform-origin:0 0;'>Reset</div>
<div class='t' style='left:144.83px;top:106.96px;font-size:11.5px;line-height:11.5px;color:#444444;font-weight:400;font-family:"Liberation Sans";transform:scaleX(0.9606);transform-origin:0 0;'>Section</div>
<div class='t' style='left:8.90px;top:129.84px;font-size:11px;line-height:11px;color:#666666;font-weight:400;font-family:"Liberation Sans";transform:scaleX(1.0339);transform-origin:0 0;'>Clipboard</div>
<div class='t' style='left:125.86px;top:129.84px;font-size:11px;line-height:11px;color:#666666;font-weight:400;font-family:"Liberation Sans";transform:scaleX(0.9603);transform-origin:0 0;'>Slides</div>
<div class='t' style='left:286.58px;top:129.84px;font-size:11px;line-height:11px;color:#666666;font-weight:400;font-family:"Liberation Sans";transform:scaleX(1.0696);transform-origin:0 0;'>Font</div>
<div class='t' style='left:484.44px;top:129.84px;font-size:11px;line-height:11px;color:#666666;font-weight:400;font-family:"Liberation Sans";transform:scaleX(0.9832);transform-origin:0 0;'>Paragraph</div>
<div class='t' style='left:710.61px;top:129.84px;font-size:11px;line-height:11px;color:#666666;font-weight:400;font-family:"Liberation Sans";transform:scaleX(1.0253);transform-origin:0 0;'>Drawing</div>
<div class='t' style='left:881.48px;top:129.84px;font-size:11px;line-height:11px;color:#666666;font-weight:400;font-family:"Liberation Sans";transform:scaleX(1.0592);transform-origin:0 0;'>Editing</div>
<div class='t' style='left:627.46px;top:95.66px;font-size:11.5px;line-height:11.5px;color:#444444;font-weight:400;font-family:"Liberation Sans";transform:scaleX(0.9223);transform-origin:0 0;'>Shapes</div>
<div class='t' style='left:667.21px;top:95.66px;font-size:11.5px;line-height:11.5px;color:#444444;font-weight:400;font-family:"Liberation Sans";transform:scaleX(0.9844);transform-origin:0 0;'>Arrange</div>
<div class='t' style='left:715.18px;top:95.66px;font-size:11.5px;line-height:11.5px;color:#a6a6a6;font-weight:400;font-family:"Liberation Sans";transform:scaleX(1.0145);transform-origin:0 0;'>Quick</div>
<div class='t' style='left:711.14px;top:110.66px;font-size:11.5px;line-height:11.5px;color:#a6a6a6;font-weight:400;font-family:"Liberation Sans";transform:scaleX(0.9422);transform-origin:0 0;'>Styles</div>
<div class='t' style='left:770.45px;top:64.96px;font-size:11.5px;line-height:11.5px;color:#a6a6a6;font-weight:400;font-family:"Liberation Sans";transform:scaleX(0.9328);transform-origin:0 0;'>Shape Fill</div>
<div class='t' style='left:770.42px;top:85.16px;font-size:11.5px;line-height:11.5px;color:#a6a6a6;font-weight:400;font-family:"Liberation Sans";transform:scaleX(0.9666);transform-origin:0 0;'>Shape Outline</div>
<div class='t' style='left:770.45px;top:106.46px;font-size:11.5px;line-height:11.5px;color:#a6a6a6;font-weight:400;font-family:"Liberation Sans";transform:scaleX(0.9270);transform-origin:0 0;'>Shape Effects</div>
<div class='t' style='left:880.61px;top:64.16px;font-size:11.5px;line-height:11.5px;color:#444444;font-weight:400;font-family:"Liberation Sans";transform:scaleX(0.9824);transform-origin:0 0;'>Find</div>
<div class='t' style='left:880.65px;top:85.76px;font-size:11.5px;line-height:11.5px;color:#444444;font-weight:400;font-family:"Liberation Sans";transform:scaleX(0.9337);transform-origin:0 0;'>Replace</div>
<div class='t' style='left:880.24px;top:106.66px;font-size:11.5px;line-height:11.5px;color:#444444;font-weight:400;font-family:"Liberation Sans";transform:scaleX(0.9388);transform-origin:0 0;'>Select</div>
<div class='t' style='left:6.53px;top:626.34px;font-size:11px;line-height:11px;color:#595959;font-weight:400;font-family:"Liberation Sans";'>Slide 1 of 10</div>
<div class='t' style='left:113.55px;top:626.34px;font-size:11px;line-height:11px;color:#595959;font-weight:400;font-family:"Liberation Sans";transform:scaleX(0.9769);transform-origin:0 0;'>English (United States)</div>
<div class='t' style='left:554.72px;top:626.54px;font-size:11px;line-height:11px;color:#595959;font-weight:400;font-family:"Liberation Sans";transform:scaleX(1.0107);transform-origin:0 0;'>Notes</div>
<div class='t' style='left:617.76px;top:626.54px;font-size:11px;line-height:11px;color:#595959;font-weight:400;font-family:"Liberation Sans";transform:scaleX(0.9584);transform-origin:0 0;'>Comments</div>
<div class='t' style='left:959.95px;top:627.04px;font-size:11px;line-height:11px;color:#595959;font-weight:400;font-family:"Liberation Sans";transform:scaleX(0.9711);transform-origin:0 0;'>68%</div>
<div class='t' style='left:26.52px;top:160.64px;font-size:11px;line-height:11px;color:#595959;font-weight:400;font-family:"Liberation Sans";transform:scaleX(1.0172);transform-origin:0 0;'>Animated Slides</div>
<div class='t' style='left:26.24px;top:536.54px;font-size:11px;line-height:11px;color:#595959;font-weight:400;font-family:"Liberation Sans";transform:scaleX(0.9832);transform-origin:0 0;'>Static Slides</div>
</body></html>
